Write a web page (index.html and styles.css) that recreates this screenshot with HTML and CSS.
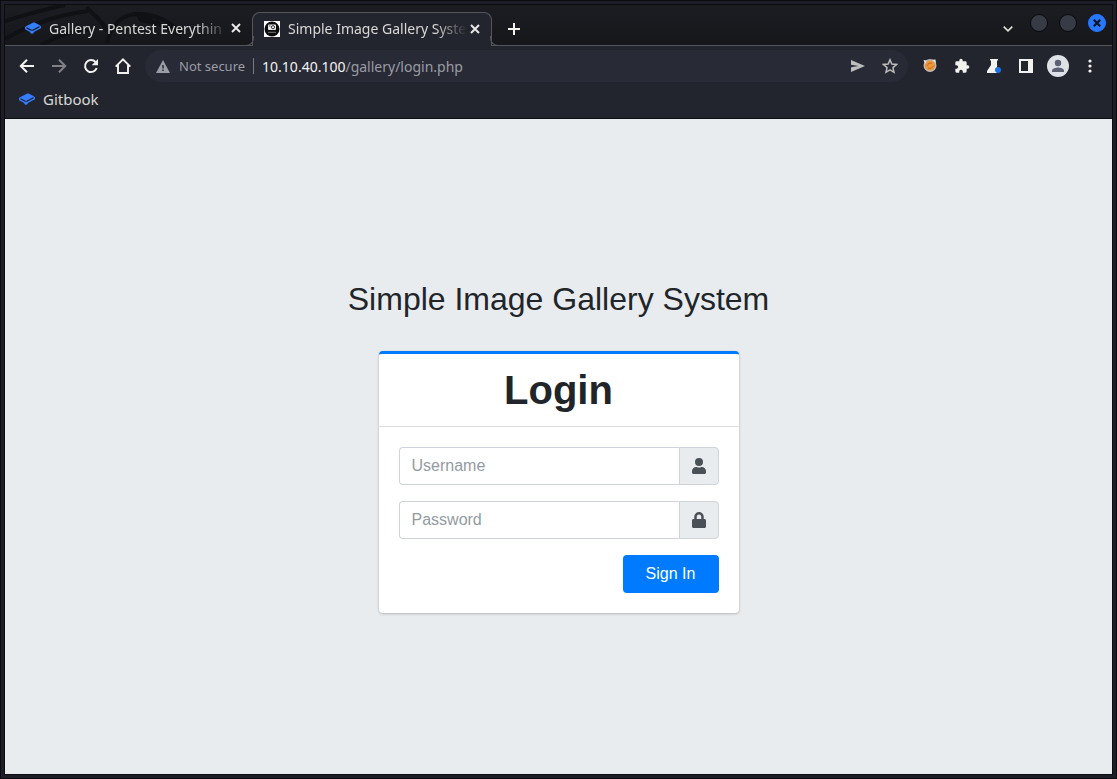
FILE: index.html
```html
<!DOCTYPE html>
<html lang="en">
<head>
<meta charset="utf-8">
<title>Simple Image Gallery System</title>
<link rel="stylesheet" href="styles.css">
</head>
<body>
<svg class="defs" aria-hidden="true">
  <symbol id="book" viewBox="0 0 16 12">
    <path d="M.3 4.500 9 .2l6.400 3.200L7 8z" fill="#347dff"/>
    <path d="M.8 4.800v2L7 10.200l8.200-4.400V4" fill="none" stroke="#347dff" stroke-width="1.500"/>
    <circle cx="7" cy="10.200" r="1.600" fill="#347dff"/>
  </symbol>
  <symbol id="close" viewBox="0 0 10 10"><path d="m1 1 8 8M9 1 1 9" stroke="#e8e8e6" stroke-width="2"/></symbol>
</svg>
<div class="window">
  <header class="tabstrip">
    <svg class="dragon" viewBox="0 0 230 40" aria-hidden="true">
      <g fill="none" stroke="#0f1114" stroke-width="4">
        <path d="M0 16C22 9 41 4 60 0M0 34C24 20 52 10 83 6M82 2c4 7 15 12 20 24M102 38C106 20 116 10 132 9c20 0 34 8 44 20"/>
        <path d="M36 40c16-9 30-14 48-16"/>
      </g>
      <path d="m128 5 5 6 2-3 8 5-1-3 9 6-1-3 9 6 18 14-24-12-18-4z" fill="#0f1114"/>
    </svg>
    <div class="tab">
      <svg class="book"><use href="#book"/></svg>
      <span class="tab-title">Gallery - Pentest Everythin</span>
      <button class="icon-btn close" aria-label="Close tab"><svg><use href="#close"/></svg></button>
    </div>
    <div class="tab active">
      <svg class="favicon" viewBox="0 0 16 16"><path d="M0 0h16v16H0z" fill="#fff"/><circle cx="8" cy="8" r="7.500" fill="#0c0c0c"/><rect x="4" y="3.500" width="8" height="5.500" rx="1" fill="#eee"/><circle cx="9" cy="6.200" r="1.600" fill="none" stroke="#222" stroke-width=".9"/><path d="M5 5h1.500" stroke="#222" stroke-width=".8"/><path d="M4 11.300h8" stroke="#777"/></svg>
      <span class="tab-title">Simple Image Gallery Syste</span>
      <button class="icon-btn close" aria-label="Close tab"><svg><use href="#close"/></svg></button>
    </div>
    <button class="icon-btn new-tab" aria-label="New tab"><svg viewBox="0 0 12 12"><path d="M6 0v12M0 6h12" stroke="#f2f2ef" stroke-width="2"/></svg></button>
    <div class="window-controls">
      <button class="icon-btn search-tabs" aria-label="Search tabs"><svg viewBox="0 0 10 6"><path d="m.7.7 4.300 4.100L9.300.7" fill="none" stroke="#deded9" stroke-width="1.700"/></svg></button>
      <button class="control" aria-label="Minimize"></button>
      <button class="control" aria-label="Maximize"></button>
      <button class="control quit" aria-label="Close window"><svg viewBox="0 0 8 8"><path d="m.8.8 6.400 6.400M7.200.8.8 7.200" stroke="#10141c" stroke-width="2.200"/></svg></button>
    </div>
  </header>
  <nav class="toolbar">
    <button class="icon-btn tool" aria-label="Back"><svg viewBox="0 0 20 20"><path d="M17 10H4.500M10 3.800 3.800 10l6.200 6.200" fill="none" stroke="#f2f2ef" stroke-width="2"/></svg></button>
    <button class="icon-btn tool dim" aria-label="Forward"><svg viewBox="0 0 20 20"><path d="M3 10h12.500M10 3.800l6.200 6.200-6.200 6.200" fill="none" stroke="#f2f2ef" stroke-width="2"/></svg></button>
    <button class="icon-btn tool" aria-label="Reload"><svg viewBox="0 0 20 20"><path d="M15.700 12A6 6 0 1 1 14.500 6" fill="none" stroke="#f2f2ef" stroke-width="2"/><path d="M17 3v6.300h-6.300z"/></svg></button>
    <button class="icon-btn tool" aria-label="Home"><svg viewBox="0 0 20 20"><path d="M2.700 10.600 10 3.300l7.300 7.300M5 9v8h10V9" fill="none" stroke="#f2f2ef" stroke-width="1.900"/></svg></button>
    <div class="omnibox">
      <svg class="warn" viewBox="0 0 14 13"><path d="M7 0 0 13h14z" fill="#9a9da5"/><path d="M7 5v3.500M7 9.500V11" stroke="#282a36" stroke-width="1.500"/></svg>
      <span class="secure">Not secure</span>
      <span class="url"><b>10.10.40.100</b>/gallery/login.php</span>
      <button class="icon-btn tool" aria-label="Share"><svg class="send" viewBox="0 0 14 12"><path d="M0 0v4.700L7.500 6 0 7.300V12l14-6z" fill="#bdbdbb"/></svg></button>
      <button class="icon-btn tool" aria-label="Bookmark"><svg class="star" viewBox="0 0 24 24"><path d="m12 2.500 2.700 6.600 7.100.6-5.400 4.700 1.600 7-6-3.700-6 3.700 1.600-7-5.400-4.700 7.100-.6z" fill="none" stroke="#bdbdbb" stroke-width="2.200"/></svg></button>
    </div>
    <button class="icon-btn tool ext" aria-label="FoxyProxy"><svg class="fox" viewBox="0 0 14 14"><circle cx="7" cy="6.500" r="5.800" fill="#ee963a" stroke="#bdb8b2" stroke-width="1.400"/><path d="m.5 1 3.500.5L2 5zM9 .8l3.500-.3.500 4z" fill="#e4e4e6"/><path d="m4 7 2-3 3 .500M5 9l3 .500 3-3" fill="none" stroke="#c06f1c"/></svg></button>
    <button class="icon-btn tool ext" aria-label="Extensions"><svg viewBox="0 0 24 24"><path d="M20.500 11H19V7a2 2 0 0 0-2-2h-4V3.500a2.500 2.500 0 0 0-5 0V5H4a2 2 0 0 0-2 2v3.800h1.500a2.700 2.700 0 0 1 0 5.400H2V20a2 2 0 0 0 2 2h3.800v-1.500a2.700 2.700 0 0 1 5.400 0V22H17a2 2 0 0 0 2-2v-4h1.500a2.500 2.500 0 0 0 0-5z"/></svg></button>
    <button class="icon-btn tool ext" aria-label="Experiments"><svg class="flask" viewBox="0 0 14 14"><path d="M3 0h8v1.500h-1V6l4 6v2H0v-2l4-6V1.500H3z" fill="#f2f2ef"/><path d="M10 6.500h4V14h-4z" fill="#23252e"/><circle cx="11" cy="11" r="3" fill="#1a73e8"/></svg></button>
    <button class="icon-btn tool ext" aria-label="Side panel"><svg class="panel" viewBox="0 0 14 14"><path d="M0 0h14v14H0zM2 2v10h7V2z" fill="#f2f2ef" fill-rule="evenodd"/></svg></button>
    <button class="icon-btn tool ext" aria-label="Profile"><svg class="avatar" viewBox="0 0 22 22"><circle cx="11" cy="11" r="11" fill="#dee1e6"/><circle cx="11" cy="8" r="3.200" fill="#5a6173"/><path d="M5 17v-1.500c0-2 4-3 6-3s6 1 6 3V17z" fill="#5a6173"/></svg></button>
    <button class="icon-btn tool ext" aria-label="Menu"><svg class="dots" viewBox="0 0 4 14"><circle cx="2" cy="2" r="1.600"/><circle cx="2" cy="7" r="1.600"/><circle cx="2" cy="12" r="1.600"/></svg></button>
  </nav>
  <nav class="bookmarks"><a href="#"><svg class="book"><use href="#book"/></svg>Gitbook</a></nav>
  <main class="page">
    <h2 class="site-title">Simple Image Gallery System</h2>
    <section class="card">
      <h1 class="card-header">Login</h1>
      <form class="card-body">
        <div class="field">
          <input type="text" placeholder="Username" aria-label="Username">
          <span class="addon"><svg viewBox="0 0 448 512"><path d="M224 256a128 128 0 1 0 0-256 128 128 0 0 0 0 256zm90 32h-17a174 174 0 0 1-146 0h-17C60 288 0 348 0 422v42c0 26 22 48 48 48h352c26 0 48-22 48-48v-42c0-74-60-134-134-134z"/></svg></span>
        </div>
        <div class="field">
          <input type="password" placeholder="Password" aria-label="Password">
          <span class="addon"><svg viewBox="0 0 448 512"><path d="M400 224h-24v-72a152 152 0 0 0-304 0v72H48c-26 0-48 22-48 48v192c0 26 22 48 48 48h352c26 0 48-22 48-48V272c0-26-22-48-48-48zm-104 0H152v-72a72 72 0 0 1 144 0z"/></svg></span>
        </div>
        <button class="submit" type="submit">Sign In</button>
      </form>
    </section>
  </main>
</div>
</body>
</html>
```

FILE: styles.css
```css
* { box-sizing: border-box; }
body { margin: 0; background: #0b0c10; font-family: "Noto Sans", sans-serif; }
.defs { position: absolute; width: 0; height: 0; }
svg { display: block; }
button { padding: 0; border: 0; font: inherit; }
.window {
  min-height: 100vh;
  display: flex;
  flex-direction: column;
  border: 1px solid #0b0c10;
  outline: 3px solid #1d1e28;
  outline-offset: -4px;
  padding: 4px;
}
.icon-btn { display: flex; align-items: center; justify-content: center; flex: none; background: none; }

.tabstrip {
  position: relative;
  display: flex;
  height: 41px;
  background: linear-gradient(#1b1d22, #15171b);
  box-shadow: inset 0 -1px #54565b;
}
.dragon { position: absolute; left: 0; top: 0; width: 230px; height: 40px; }
.tab {
  position: relative;
  display: flex;
  align-items: center;
  width: 247px;
  margin-top: 7px;
  padding: 0 8px 2px 20px;
  color: #d8d8d6;
  font-size: 14px;
}
.tab .book { margin-right: 8px; }
.book { width: 16px; height: 12px; flex: none; }
.tab.active {
  width: 240px;
  padding-left: 11px;
  background: #23252e;
  border: 1px solid #54565b;
  border-bottom: 0;
  border-radius: 8px 8px 0 0;
}
.tab.active::before, .tab.active::after {
  content: "";
  position: absolute;
  bottom: 0;
  width: 9px;
  height: 9px;
  border-bottom: 1px solid #54565b;
}
.tab.active::before {
  left: -9px;
  border-right: 1px solid #54565b;
  border-bottom-right-radius: 8px;
}
.tab.active::after {
  right: -9px;
  border-left: 1px solid #54565b;
  border-bottom-left-radius: 8px;
}
.favicon { width: 16px; height: 16px; margin-right: 8px; flex: none; }
.tab-title {
  flex: 1;
  overflow: hidden;
  white-space: nowrap;
  -webkit-mask-image: linear-gradient(90deg, #000 calc(100% - 32px), transparent);
  mask-image: linear-gradient(90deg, #000 calc(100% - 32px), transparent);
}
.close { width: 16px; height: 16px; }
.close svg { width: 10px; height: 10px; }
.new-tab { width: 28px; margin: 7px 0 0 8px; }
.new-tab svg { width: 12px; height: 12px; }
.window-controls { display: flex; margin-left: auto; gap: 11px; padding: 9px 6px 0 0; }
.search-tabs { width: 10px; height: 29px; margin-right: 6px; }
.search-tabs svg { width: 10px; height: 6px; }
.control { width: 18px; height: 18px; border-radius: 50%; background: #363b46; border: 1px solid #090a0c; }
.quit { display: flex; align-items: center; justify-content: center; background: #2777ff; border-color: #2777ff; }
.quit svg { width: 8px; height: 8px; }

.toolbar { display: flex; align-items: center; height: 40px; padding: 0 12px; gap: 12px; background: #23252e; }
.tool { width: 20px; height: 20px; }
.tool svg { width: 20px; height: 20px; fill: #f2f2ef; }
.dim { opacity: .45; }
.omnibox {
  flex: 1;
  display: flex;
  align-items: center;
  height: 32px;
  padding: 0 8px 0 11px;
  border-radius: 16px;
  background: #282a36;
  font-size: 14px;
  color: #9a9da5;
}
.omnibox .tool + .tool { margin-left: 12px; }
.warn { width: 14px; height: 13px; margin-right: 9px; }
.secure { padding-right: 8px; border-right: 1px solid #777a82; font-size: 13px; line-height: 16px; }
.url { flex: 1; padding-left: 8px; }
.url b { font-weight: 400; color: #f2f2f2; }
.toolbar .send { width: 14px; height: 12px; }
.toolbar .star { width: 16px; height: 16px; }
.toolbar .ext svg { width: 16px; height: 16px; }
.toolbar .ext .fox, .toolbar .ext .flask, .toolbar .ext .panel { width: 14px; height: 14px; }
.toolbar .ext .avatar { width: 22px; height: 22px; flex: none; }
.toolbar .ext .dots { width: 4px; height: 14px; }
.bookmarks { height: 33px; padding: 0 14px; background: #23252e; border-bottom: 1px solid #0b0c10; }
.bookmarks a { display: flex; align-items: center; gap: 8px; width: max-content; height: 26px; color: #d8d8d6; font-size: 15px; text-decoration: none; }

.page {
  flex: 1;
  display: flex;
  flex-direction: column;
  align-items: center;
  justify-content: center;
  background: #e9ecef;
  color: #212529;
  font-family: "Liberation Sans", Arial, sans-serif;
  font-size: 16px;
}
.site-title { margin: 0 0 33px; font-size: 32px; font-weight: 400; line-height: 38px; }
.card {
  width: 100%;
  max-width: 360px;
  background: #fff;
  border-top: 3px solid #007bff;
  border-radius: 4px;
  box-shadow: 0 0 1px rgba(0, 0, 0, .13), 0 1px 3px rgba(0, 0, 0, .2);
}
.card-header { margin: 0; padding: 12px 20px; border-bottom: 1px solid #dfdfdf; font-size: 40px; line-height: 48px; text-align: center; }
.card-body { display: flex; flex-direction: column; gap: 16px; padding: 20px; }
.field { display: flex; height: 38px; }
.field input {
  flex: 1;
  min-width: 0;
  padding: 6px 12px;
  border: 1px solid #ced4da;
  border-right: 0;
  border-radius: 4px 0 0 4px;
  font: inherit;
}
.field input::placeholder { color: #939ba2; }
.addon {
  display: flex;
  align-items: center;
  justify-content: center;
  width: 40px;
  background: #e9ecef;
  border: 1px solid #ced4da;
  border-radius: 0 4px 4px 0;
}
.addon svg { width: 14px; height: 16px; fill: #495057; }
.submit { align-self: flex-end; width: 96px; height: 38px; border-radius: 4px; background: #007bff; color: #fff; }
```
